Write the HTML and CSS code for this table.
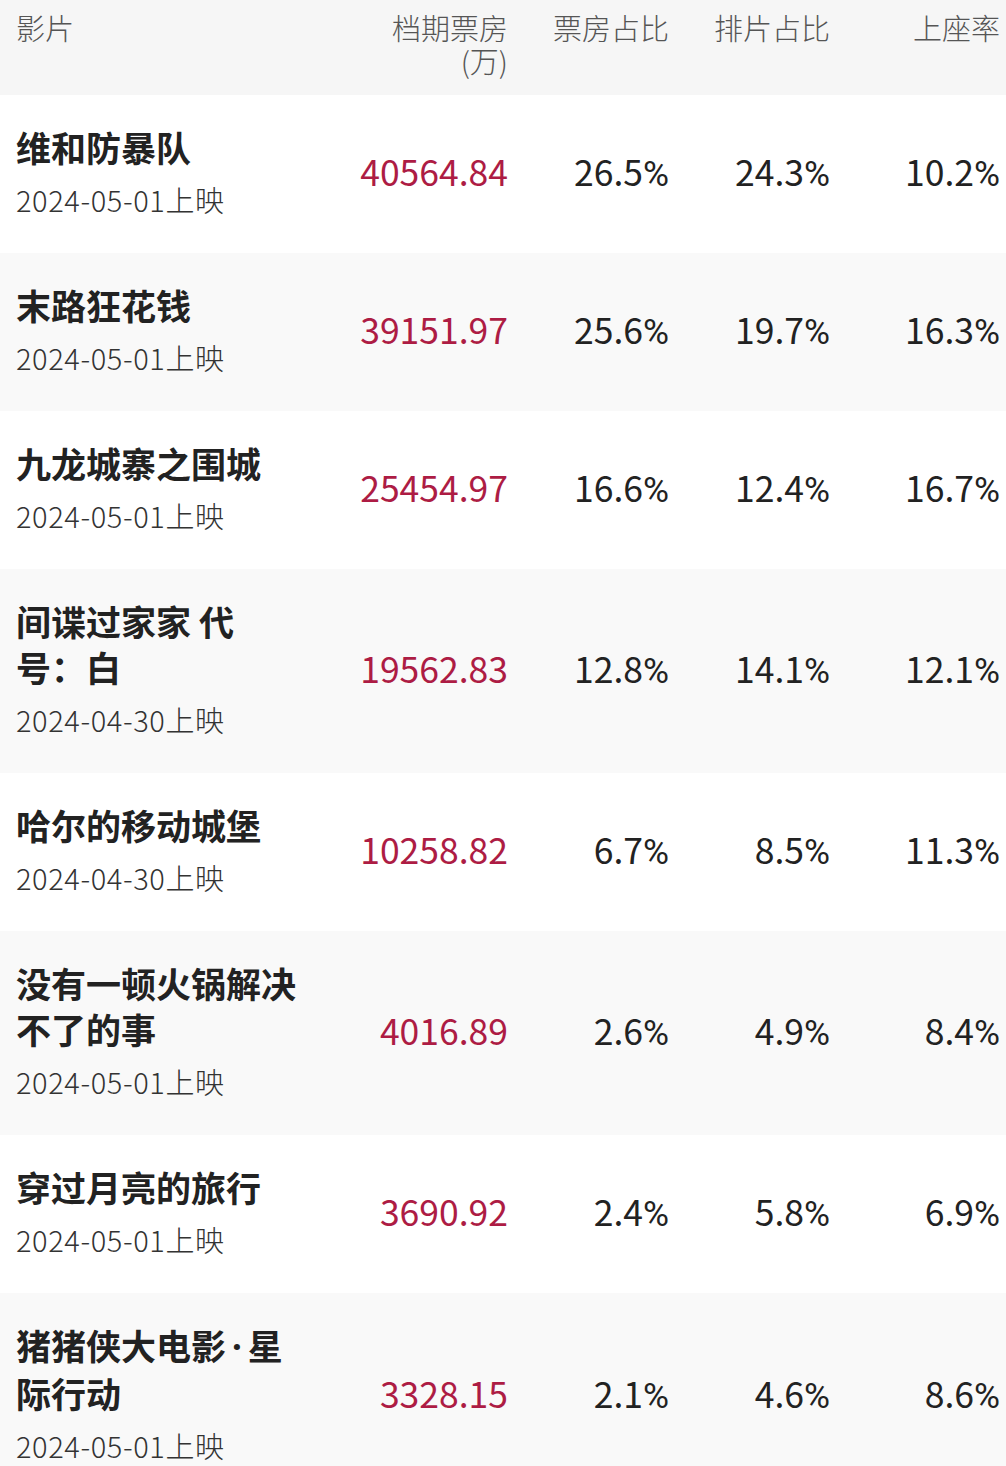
FILE: index.html
```html
<!DOCTYPE html>
<html lang="zh-CN">
<head>
<meta charset="utf-8">
<title>档期票房</title>
<link rel="stylesheet" href="styles.css">
</head>
<body>
<table class="box">
  <thead>
    <tr class="head">
      <th class="c-film">影片</th>
      <th class="c-num c-bo">档期票房<br>(万)</th>
      <th class="c-num">票房占比</th>
      <th class="c-num">排片占比</th>
      <th class="c-num c-last">上座率</th>
    </tr>
  </thead>
  <tbody>
    <tr>
      <td class="c-film"><div class="title">维和防暴队</div><div class="date">2024-05-01上映</div></td>
      <td class="c-num c-bo money">40564.84</td>
      <td class="c-num">26.5<span class="pct">%</span></td>
      <td class="c-num">24.3<span class="pct">%</span></td>
      <td class="c-num c-last">10.2<span class="pct">%</span></td>
    </tr>
    <tr class="alt">
      <td class="c-film"><div class="title">末路狂花钱</div><div class="date">2024-05-01上映</div></td>
      <td class="c-num c-bo money">39151.97</td>
      <td class="c-num">25.6<span class="pct">%</span></td>
      <td class="c-num">19.7<span class="pct">%</span></td>
      <td class="c-num c-last">16.3<span class="pct">%</span></td>
    </tr>
    <tr>
      <td class="c-film"><div class="title">九龙城寨之围城</div><div class="date">2024-05-01上映</div></td>
      <td class="c-num c-bo money">25454.97</td>
      <td class="c-num">16.6<span class="pct">%</span></td>
      <td class="c-num">12.4<span class="pct">%</span></td>
      <td class="c-num c-last">16.7<span class="pct">%</span></td>
    </tr>
    <tr class="alt">
      <td class="c-film"><div class="title">间谍过家家 代号：白</div><div class="date">2024-04-30上映</div></td>
      <td class="c-num c-bo money">19562.83</td>
      <td class="c-num">12.8<span class="pct">%</span></td>
      <td class="c-num">14.1<span class="pct">%</span></td>
      <td class="c-num c-last">12.1<span class="pct">%</span></td>
    </tr>
    <tr>
      <td class="c-film"><div class="title">哈尔的移动城堡</div><div class="date">2024-04-30上映</div></td>
      <td class="c-num c-bo money">10258.82</td>
      <td class="c-num">6.7<span class="pct">%</span></td>
      <td class="c-num">8.5<span class="pct">%</span></td>
      <td class="c-num c-last">11.3<span class="pct">%</span></td>
    </tr>
    <tr class="alt">
      <td class="c-film"><div class="title">没有一顿火锅解决不了的事</div><div class="date">2024-05-01上映</div></td>
      <td class="c-num c-bo money">4016.89</td>
      <td class="c-num">2.6<span class="pct">%</span></td>
      <td class="c-num">4.9<span class="pct">%</span></td>
      <td class="c-num c-last">8.4<span class="pct">%</span></td>
    </tr>
    <tr>
      <td class="c-film"><div class="title">穿过月亮的旅行</div><div class="date">2024-05-01上映</div></td>
      <td class="c-num c-bo money">3690.92</td>
      <td class="c-num">2.4<span class="pct">%</span></td>
      <td class="c-num">5.8<span class="pct">%</span></td>
      <td class="c-num c-last">6.9<span class="pct">%</span></td>
    </tr>
    <tr class="alt">
      <td class="c-film"><div class="title">猪猪侠大电影<span class="dot">·</span>星际行动</div><div class="date">2024-05-01上映</div></td>
      <td class="c-num c-bo money">3328.15</td>
      <td class="c-num">2.1<span class="pct">%</span></td>
      <td class="c-num">4.6<span class="pct">%</span></td>
      <td class="c-num c-last">8.6<span class="pct">%</span></td>
    </tr>
  </tbody>
</table>
</body>
</html>
```

FILE: styles.css
```css
html, body {
  margin: 0;
  padding: 0;
  background: #ffffff;
}
body {
  width: 1006px;
  height: 1466px;
  overflow: hidden;
  font-family: "Noto Sans CJK SC", "Noto Sans", sans-serif;
  color: #222;
}
.box {
  border-collapse: collapse;
  border-spacing: 0;
  table-layout: fixed;
  width: 1006px;
}
.box th, .box td {
  padding: 0;
}
.c-film {
  width: 318px;
  box-sizing: border-box;
  padding: 29px 20px 33px 16px !important;
  text-align: left;
  vertical-align: top;
  box-shadow: 4px 0 6px -3px rgba(0, 0, 0, 0.05);
  position: relative;
}
.c-num {
  width: 161px;
  text-align: right;
  vertical-align: middle;
  padding-right: 8px !important;
  box-sizing: border-box;
  font-family: "Noto Sans CJK SC", "Noto Sans", sans-serif;
  font-size: 35.5px;
  font-weight: 400;
  color: #222;
  letter-spacing: 0;
}
tbody .c-num {
  padding-bottom: 7px !important;
}
.c-num.c-bo { width: 198px; }
.c-num.c-last { width: 168px; padding-right: 6px !important; }
.pct {
  font-family: Roboto, "Noto Sans", sans-serif;
  font-weight: 400;
}
.head {
  background: #f6f6f6;
  height: 95px;
}
.head th {
  font-family: "Noto Sans CJK SC", sans-serif;
  font-weight: 300;
  font-size: 29px;
  line-height: 33px;
  color: #555;
  vertical-align: top;
  letter-spacing: 0;
}
.head th.c-film {
  padding: 11px 20px 0 16px !important;
}
.head th.c-num {
  padding-top: 11px !important;
}
.alt { background: #f9f9f9; }
.title {
  font-size: 35px;
  line-height: 46px;
  font-weight: 700;
  color: #222;
}
.dot {
  font-family: "Noto Sans", sans-serif;
  padding: 0 6px;
}
.date {
  margin-top: 8px;
  font-size: 29px;
  line-height: 42px;
  font-weight: 300;
  color: #333;
  letter-spacing: 0.6px;
  white-space: nowrap;
}
.money {
  color: #ad1c44;
}
```
